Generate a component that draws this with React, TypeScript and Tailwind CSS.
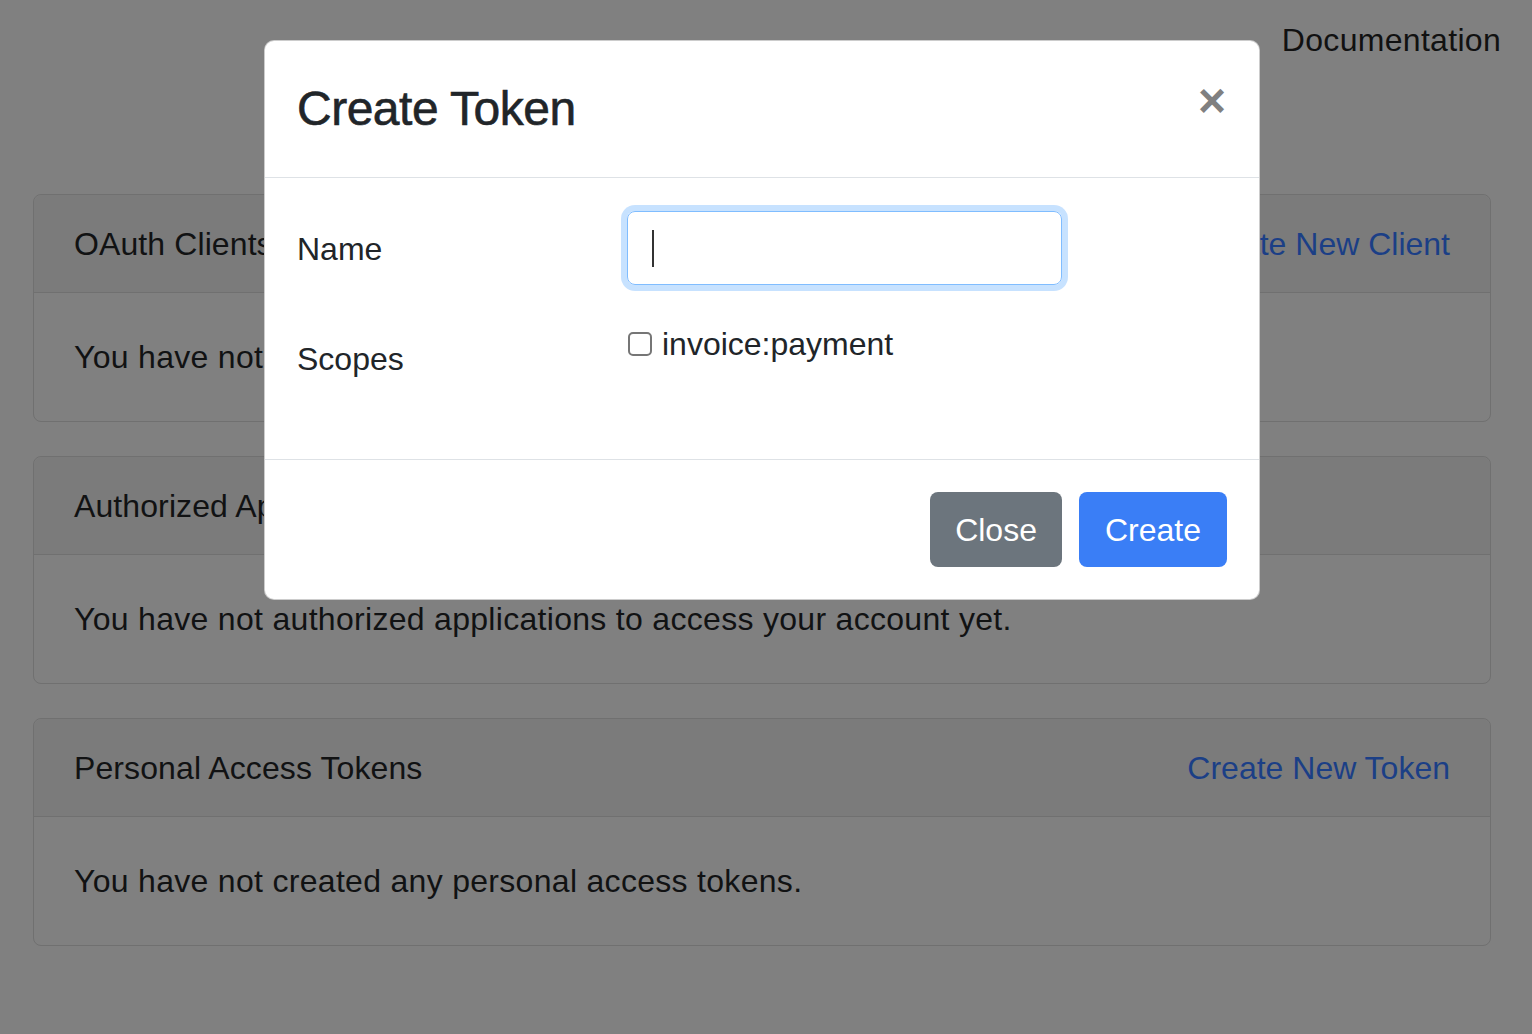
import { useState } from 'react';

type Card = {
  title: string;
  action?: string;
  body: string;
};

const cards: Card[] = [
  {
    title: 'OAuth Clients',
    action: 'Create New Client',
    body: 'You have not created any OAuth clients.',
  },
  {
    title: 'Authorized Applications',
    body: 'You have not authorized applications to access your account yet.',
  },
  {
    title: 'Personal Access Tokens',
    action: 'Create New Token',
    body: 'You have not created any personal access tokens.',
  },
];

function CreateTokenModal() {
  const [name, setName] = useState('');
  const [scopes, setScopes] = useState<string[]>([]);

  const toggleScope = (scope: string) => {
    setScopes((prev) => (prev.includes(scope) ? prev.filter((s) => s !== scope) : [...prev, scope]));
  };

  return (
    <div className="absolute left-[264px] top-[40px] w-[996px] rounded-[10px] border border-black/20 bg-white text-[#212529]">
      <div className="flex items-start justify-between border-b border-[#dee2e6] px-[32px] py-[32px]">
        <h4 className="text-[48px] leading-[72px] font-medium tracking-[-0.5px] [-webkit-text-stroke:0.6px_#212529]">
          Create Token
        </h4>
        <button className="mr-[1px] -mt-[2px] text-[48px] leading-[60px] font-bold text-[#808080]">×</button>
      </div>

      <div className="h-[281px] px-[32px] pt-[33px]">
        <div className="mb-[32px] flex">
          <label className="w-[330px] py-[14px] leading-[48px]">Name</label>
          <div className="relative w-[435px]">
            <input
              value={name}
              onChange={(e) => setName(e.target.value)}
              className="h-[74px] w-full rounded-[8px] border border-[#80bdff] px-[24px] text-[32px] outline-none shadow-[0_0_0_6px_rgba(0,123,255,0.22)]"
            />
            {name === '' && <div className="absolute left-[25px] top-[19px] h-[37px] w-[2px] bg-[#333]" />}
          </div>
        </div>

        <div className="flex">
          <label className="w-[330px] py-[16px] leading-[48px]">Scopes</label>
          <label className="mt-[1px] flex h-[48px] items-center gap-[10px]">
            <input
              type="checkbox"
              checked={scopes.includes('invoice:payment')}
              onChange={() => toggleScope('invoice:payment')}
              className="ml-[1px] h-[24px] w-[24px] appearance-none rounded-[5px] border-2 border-[#767676] bg-white checked:bg-[#3b7ff6]"
            />
            <span>invoice:payment</span>
          </label>
        </div>
      </div>

      <div className="flex justify-end gap-[17px] border-t border-[#dee2e6] px-[32px] py-[32px]">
        <button className="h-[75px] rounded-[8px] bg-[#6c757d] px-[25px] text-white">Close</button>
        <button className="h-[75px] rounded-[8px] bg-[#3a7ef6] px-[26px] text-white">Create</button>
      </div>
    </div>
  );
}

export default function App() {
  return (
    <div
      className="relative min-h-[1034px] bg-[#808080] text-[32px] leading-[48px] text-[#111213]"
      style={{ fontFamily: '"Liberation Sans", Arial, sans-serif' }}
    >
      <div className="flex justify-end pr-[31px] pt-[16px]">
        <a className="tracking-[0.3px] text-[#111]">Documentation</a>
      </div>

      <div className="ml-[33px] mt-[130px] flex w-[1458px] flex-col gap-[34px]">
        {cards.map((card) => (
          <div key={card.title} className="rounded-[8px] border border-[#707070]">
            <div className="flex h-[98px] items-center justify-between rounded-t-[8px] border-b border-[#707070] bg-[#7b7b7b] px-[40px]">
              <span className="tracking-[0.1px]">{card.title}</span>
              {card.action && <a className="text-[#1b3f86]">{card.action}</a>}
            </div>
            <div className="flex h-[128px] items-center px-[40px] tracking-[0.3px]">{card.body}</div>
          </div>
        ))}
      </div>

      <CreateTokenModal />
    </div>
  );
}
